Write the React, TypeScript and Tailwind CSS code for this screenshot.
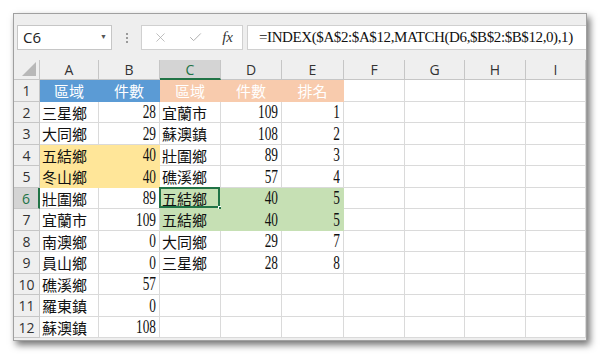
import { Check, X } from 'lucide-react'

type CellDef = { v?: string; num?: boolean; fill?: string; white?: boolean; center?: boolean }

const colWidths = ['w-[59px]', 'w-[61px]', 'w-[61px]', 'w-[61px]', 'w-[62px]', 'w-[61px]', 'w-[60px]', 'w-[61px]', 'w-[60px]']
const letters = ['A', 'B', 'C', 'D', 'E', 'F', 'G', 'H', 'I']

const colA = ['三星鄉', '大同鄉', '五結鄉', '冬山鄉', '壯圍鄉', '宜蘭市', '南澳鄉', '員山鄉', '礁溪鄉', '羅東鎮', '蘇澳鎮']
const colB = ['28', '29', '40', '40', '89', '109', '0', '0', '57', '0', '108']
const colC = ['宜蘭市', '蘇澳鎮', '壯圍鄉', '礁溪鄉', '五結鄉', '五結鄉', '大同鄉', '三星鄉']
const colD = ['109', '108', '89', '57', '40', '40', '29', '28']
const colE = ['1', '2', '3', '4', '5', '5', '7', '8']

function buildRow(r: number): CellDef[] {
  if (r === 1) {
    return [
      { v: '區域', fill: 'blue', white: true, center: true },
      { v: '件數', fill: 'blue', white: true, center: true },
      { v: '區域', fill: 'orange', white: true, center: true },
      { v: '件數', fill: 'orange', white: true, center: true },
      { v: '排名', fill: 'orange', white: true, center: true },
      {}, {}, {}, {},
    ]
  }
  const i = r - 2
  const yellow = r === 4 || r === 5
  const green = r === 6 || r === 7
  return [
    { v: colA[i], fill: yellow ? 'yellow' : undefined },
    { v: colB[i], num: true, fill: yellow ? 'yellow' : undefined },
    { v: colC[i], fill: green ? 'green' : undefined },
    { v: colD[i], num: true, fill: green ? 'green' : undefined },
    { v: colE[i], num: true, fill: green ? 'green' : undefined },
    {}, {}, {}, {},
  ]
}

const fillCls: Record<string, string> = {
  blue: 'bg-[#5b9bd5] border-[#5b9bd5]',
  orange: 'bg-[#f8cbad] border-[#f8cbad]',
  yellow: 'bg-[#ffe699] border-[#ffe699]',
  green: 'bg-[#c6e0b4] border-[#c6e0b4]',
}

function Cell({ c, w, selected }: { c: CellDef; w: string; selected?: boolean }) {
  const base = c.fill ? fillCls[c.fill] : 'bg-white border-[#dadada]'
  const align = c.center ? 'justify-center' : c.num ? 'justify-end pr-[3px]' : 'justify-start pl-[2px]'
  const font = c.num
    ? "font-['Liberation_Serif',serif] text-[18px] inline-block scale-x-[0.74] origin-right"
    : "font-['Noto_Sans_CJK_TC','Noto_Sans_CJK_SC',sans-serif] text-[15px]"
  return (
    <div className={`relative ${w} h-full shrink-0 flex items-center border-r border-b ${base} ${align}`}>
      <span className={`${font} leading-none ${c.white ? 'text-white' : 'text-[#111]'}`}>{c.v}</span>
      {selected && (
        <>
          <div className="absolute left-[-1px] top-[-1px] right-0 bottom-0 border-2 border-[#217346]" />
          <div className="absolute right-[-3px] bottom-[-3px] w-[5px] h-[5px] bg-[#217346] border border-white" />
        </>
      )}
    </div>
  )
}

export default function App() {
  const rows = Array.from({ length: 12 }, (_, k) => k + 1)
  return (
    <div className="w-[600px] h-[354px] bg-white pt-[13px] pl-[13px]">
      <div className="w-[574px] h-[328px] border border-[#a0a0a0] bg-[#eeeeee] flex flex-col overflow-hidden shadow-[3px_4px_7px_rgba(0,0,0,0.55)]">
        <div className="h-[11px] shrink-0" />
        {/* formula bar */}
        <div className="h-[25px] shrink-0 flex items-stretch">
          <div className="ml-[3px] w-[95px] bg-white border border-[#c6c6c6] flex items-center justify-between pl-[5px] pr-[4px]">
            <span className="font-['Open_Sans',sans-serif] text-[15px] text-[#222]">C6</span>
            <span className="text-[7px] text-[#555]">▼</span>
          </div>
          <div className="w-[29px] flex items-center justify-center">
            <div className="flex flex-col gap-[2px]">
              <div className="w-[2px] h-[2px] bg-[#9a9a9a]" />
              <div className="w-[2px] h-[2px] bg-[#9a9a9a]" />
              <div className="w-[2px] h-[2px] bg-[#9a9a9a]" />
            </div>
          </div>
          <div className="w-[102px] bg-white border border-[#d0d0d0] flex items-center pl-[11px] pr-[9px] justify-between">
            <X size={15} strokeWidth={1.2} className="text-[#aaaaaa]" />
            <Check size={15} strokeWidth={1.5} className="text-[#aaaaaa]" />
            <span className="font-['Liberation_Serif',serif] italic text-[15px] text-[#333]">fx</span>
          </div>
          <div className="ml-[4px] flex-1 bg-white border border-[#d0d0d0] border-r-0 flex items-center pl-[11px]">
            <span className="font-['Liberation_Serif',serif] text-[15px] tracking-[-0.4px] text-[#111] whitespace-nowrap">
              =INDEX($A$2:$A$12,MATCH(D6,$B$2:$B$12,0),1)
            </span>
          </div>
        </div>
        <div className="h-[10px] shrink-0" />
        {/* column headers */}
        <div className="h-[20px] shrink-0 flex">
          <div className="w-[26px] shrink-0 border-r border-b border-[#c6c6c6] relative bg-[#efefef]">
            <svg width="16" height="14" viewBox="0 0 16 14" className="absolute right-[3px] bottom-[3px]">
              <polygon points="16,0 16,14 2,14" fill="#b8b8b8" />
            </svg>
          </div>
          {letters.map((l, i) => (
            <div
              key={l}
              className={`${colWidths[i]} shrink-0 flex items-center justify-center border-r font-['Open_Sans',sans-serif] text-[14px] ${
                l === 'C'
                  ? 'bg-[#d4d4d4] border-[#c6c6c6] border-b-2 border-b-[#217346] text-[#217346]'
                  : 'bg-[#efefef] border-[#c6c6c6] border-b text-[#333]'
              }`}
            >
              {l}
            </div>
          ))}
        </div>
        {/* rows */}
        {rows.map((r) => {
          const cells = buildRow(r)
          return (
            <div key={r} className={`${r % 2 === 1 ? 'h-[22px]' : 'h-[21px]'} shrink-0 flex`}>
              <div
                className={`w-[26px] shrink-0 flex items-center justify-center border-b font-['Open_Sans',sans-serif] text-[14px] ${
                  r === 6
                    ? 'bg-[#d4d4d4] border-[#c6c6c6] border-r-2 border-r-[#217346] text-[#217346]'
                    : 'bg-[#efefef] border-[#c6c6c6] border-r text-[#333]'
                }`}
              >
                {r}
              </div>
              {cells.map((c, i) => (
                <Cell key={i} c={c} w={colWidths[i]} selected={r === 6 && i === 2} />
              ))}
            </div>
          )
        })}
      </div>
    </div>
  )
}
